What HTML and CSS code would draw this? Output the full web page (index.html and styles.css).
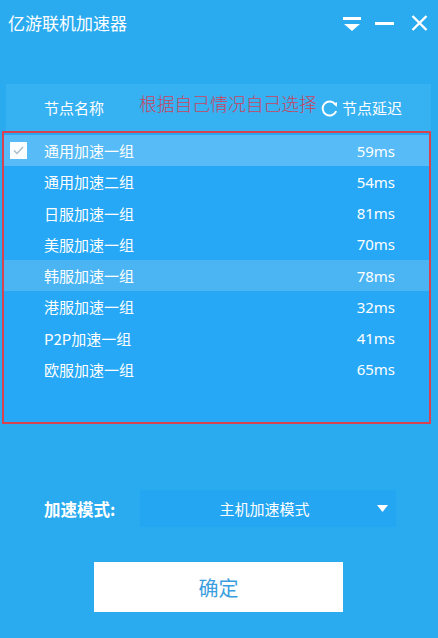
FILE: index.html
```html
<!DOCTYPE html>
<html lang="zh-CN">
<head>
<meta charset="utf-8">
<title>亿游联机加速器</title>
<link rel="stylesheet" href="styles.css">
</head>
<body>
<div class="app">
  <div class="titlebar">
    <div class="title">亿游联机加速器</div>
    <div class="controls">
      <svg class="ic ic-menu" width="18" height="16" viewBox="0 0 18 16"><rect x="0" y="1" width="18" height="3" fill="#fff"/><path d="M1 8 H17 L9 15 Z" fill="#fff"/></svg>
      <svg class="ic ic-min" width="19" height="16" viewBox="0 0 19 16"><rect x="0" y="7" width="19" height="3" fill="#fff"/></svg>
      <svg class="ic ic-close" width="17" height="16" viewBox="0 0 17 16"><path d="M1.5 1 L15.5 15 M15.5 1 L1.5 15" stroke="#fff" stroke-width="2.4" fill="none"/></svg>
    </div>
  </div>

  <div class="panel">
    <div class="head">
      <span>节点名称</span>
      <span class="delay-h">
        <svg class="refresh" width="17" height="17" viewBox="0 0 16 16"><path d="M13.6 4.2 A6.6 6.6 0 1 0 14.3 10.5" stroke="#fff" stroke-width="1.9" fill="none"/><path d="M11.2 3.2 L15.2 2.2 L14.8 6.6 Z" fill="#fff"/></svg>
        节点延迟
      </span>
    </div>
    <div class="note">根据自己情况自己选择</div>
    <div class="list">
      <div class="row selected">
        <span class="slot"><span class="chk"><svg width="11" height="9" viewBox="0 0 11 9"><path d="M1 4.5 L4 7.5 L10 1" stroke="#a9bccb" stroke-width="1.4" fill="none"/></svg></span></span>
        <span class="name">通用加速一组</span><span class="ms">59ms</span>
      </div>
      <div class="row"><span class="slot"></span><span class="name">通用加速二组</span><span class="ms">54ms</span></div>
      <div class="row"><span class="slot"></span><span class="name">日服加速一组</span><span class="ms">81ms</span></div>
      <div class="row"><span class="slot"></span><span class="name">美服加速一组</span><span class="ms">70ms</span></div>
      <div class="row hover"><span class="slot"></span><span class="name">韩服加速一组</span><span class="ms">78ms</span></div>
      <div class="row"><span class="slot"></span><span class="name">港服加速一组</span><span class="ms">32ms</span></div>
      <div class="row"><span class="slot"></span><span class="name">P2P加速一组</span><span class="ms">41ms</span></div>
      <div class="row"><span class="slot"></span><span class="name">欧服加速一组</span><span class="ms">65ms</span></div>
    </div>
  </div>

  <div class="mode">
    <span class="mode-label">加速模式:</span>
    <div class="select">
      <span class="sel-text">主机加速模式</span>
      <svg class="arrow" width="11" height="7" viewBox="0 0 11 7"><path d="M0 0 H11 L5.5 7 Z" fill="#fff"/></svg>
    </div>
  </div>

  <div class="btn-wrap">
    <div class="ok">确定</div>
  </div>
</div>
</body>
</html>
```

FILE: styles.css
```css
html, body {
  margin: 0;
  padding: 0;
}
body {
  background: #2aabf0;
  font-family: "Noto Sans CJK SC", "Noto Sans", sans-serif;
  color: #fff;
}
.app {
  width: 438px;
  height: 638px;
  background: #2aabf0;
  overflow: hidden;
}
.titlebar {
  height: 46px;
  display: flex;
  align-items: center;
  justify-content: space-between;
  padding: 0 10px 0 8px;
}
.title {
  font-size: 17px;
  line-height: 20px;
}
.controls {
  display: flex;
  align-items: center;
  gap: 14px;
}
.ic { display: block; }
.ic-menu { margin-top: 1px; }
.ic-close { margin-left: 3px; }

.panel {
  position: relative;
  margin: 38px 7px 0 6px;
  background: #36b1f2;
}
.head {
  height: 47px;
  display: flex;
  align-items: center;
  justify-content: space-between;
  padding: 0 29px 0 38px;
  font-size: 15px;
}
.delay-h {
  display: flex;
  align-items: center;
  gap: 4px;
}
.refresh { display: block; margin-top: 1px; }
.note {
  position: absolute;
  left: 133px;
  top: 8px;
  font-size: 17.8px;
  line-height: 22px;
  color: #c7455f;
  font-weight: 300;
}
.list {
  margin-left: -4px;
  height: 287px;
  border: 2px solid #d8434f;
  background: #26a8f6;
  padding-top: 2px;
}
.row {
  height: 31.25px;
  display: flex;
  align-items: center;
  padding: 0 34px 0 2px;
  font-size: 15px;
}
.row.selected { background: #56bbf6; }
.row.hover { background: #4bb5f4; }
.slot {
  width: 38px;
  display: flex;
  align-items: center;
}
.chk {
  margin-left: 4px;
  width: 17px;
  height: 17px;
  background: #fbfdff;
  display: flex;
  align-items: center;
  justify-content: center;
}
.chk svg { display: block; }
.name { flex: 1; }
.ms {
  font-family: "Noto Sans", sans-serif;
  font-size: 15px;
}

.mode {
  margin-top: 66px;
  display: flex;
  align-items: center;
  padding-left: 44px;
}
.mode-label {
  width: 96px;
  font-size: 16.5px;
  font-weight: 700;
}
.select {
  width: 256px;
  height: 37px;
  background: #25a6f3;
  display: flex;
  align-items: center;
}
.sel-text {
  flex: 1;
  text-align: center;
  font-size: 15px;
  padding-left: 12px;
}
.arrow {
  display: block;
  margin-right: 8px;
}
.btn-wrap {
  margin-top: 35px;
  padding-left: 94px;
}
.ok {
  width: 249px;
  height: 50px;
  background: #fff;
  color: #3a9ee0;
  font-size: 20px;
  display: flex;
  align-items: center;
  justify-content: center;
}
```
